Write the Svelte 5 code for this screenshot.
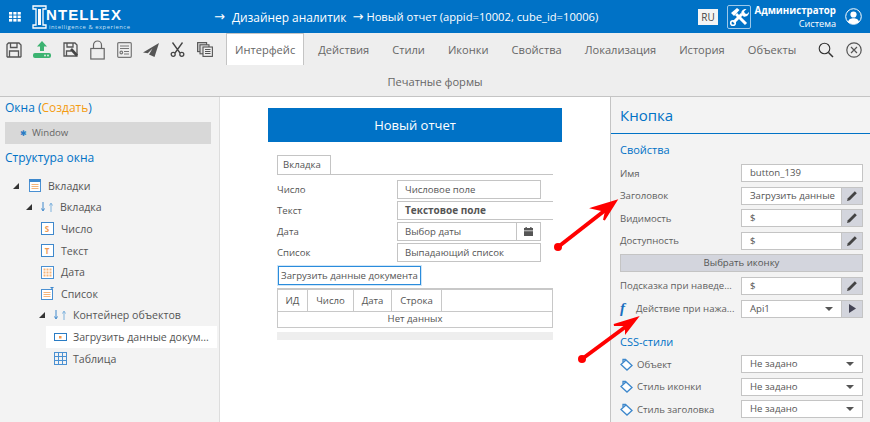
<script>
    const tabs = ['Интерфейс', 'Действия', 'Стили', 'Иконки', 'Свойства', 'Локализация', 'История', 'Объекты'];

    const tree = [
        { label: 'Вкладки', depth: 0, arrow: true, icon: 'tabs' },
        { label: 'Вкладка', depth: 1, arrow: true, icon: 'updown' },
        { label: 'Число', depth: 2, icon: 'num' },
        { label: 'Текст', depth: 2, icon: 'text' },
        { label: 'Дата', depth: 2, icon: 'date' },
        { label: 'Список', depth: 2, icon: 'list' },
        { label: 'Контейнер объектов', depth: 2, arrow: true, icon: 'updown' },
        { label: 'Загрузить данные докум...', depth: 3, icon: 'btn', selected: true },
        { label: 'Таблица', depth: 3, icon: 'table' }
    ];

    const columns = ['ИД', 'Число', 'Дата', 'Строка'];
    const cssRows = ['Объект', 'Стиль иконки', 'Стиль заголовка'];
</script>

<div class="page">
    <header class="topbar">
        <svg class="grid-icon" width="12" height="10" viewBox="0 0 12 10" fill="#fff">
            {#each [0, 4.3, 8.6] as x}
                {#each [0, 3.5, 7] as y}
                    <rect {x} {y} width="3.2" height="2.6" />
                {/each}
            {/each}
        </svg>
        <div class="logo">
            <svg width="15" height="24" viewBox="0 0 15 24" fill="none" stroke="#fff" stroke-width="1.3">
                <path d="M1 1h13v3h-3v16h3v3H1v-3h3V4H1z" />
                <path d="M7.5 4v16" stroke-width="3" />
            </svg>
            <div class="logo-words">
                <span class="logo-name">NTELLEX</span>
                <span class="logo-sub">intelligence &amp; experience</span>
            </div>
        </div>
        <div class="crumbs">
            <span class="crumb-arrow">→</span><span>Дизайнер аналитик</span>
            <span class="crumb-arrow next">→</span><span class="crumb-last">Новый отчет (appid=10002, cube_id=10006)</span>
        </div>
        <span class="lang">RU</span>
        <div class="tools-badge">
            <svg width="22" height="22" viewBox="0 0 22 22" fill="none" stroke="#fff">
                <path d="M8 8l10 10" stroke-width="3" />
                <path d="M3 7l6-5 2.500 2-5.500 6z" fill="#fff" stroke="none" />
                <path d="M5.500 16.500 14 8" stroke-width="3" />
                <path d="M13.500 8.500c-1-3 1.500-6 5-5.500l-2.500 2.500 1 2 2 .5 2-2c.3 3-3 5.500-5.500 4.500z" fill="#fff" stroke="none" />
                <circle cx="5" cy="17" r="2.300" stroke-width="1.600" />
            </svg>
        </div>
        <div class="user">
            <strong>Администратор</strong>
            <span>Система</span>
        </div>
        <svg class="avatar" width="17" height="17" viewBox="0 0 17 17">
            <circle cx="8.500" cy="8.500" r="7.800" fill="none" stroke="#fff" stroke-width="1" />
            <circle cx="8.500" cy="6.500" r="3.100" fill="#fff" />
            <path d="M3 14c.6-3 3-3.800 5.500-3.800S13.400 11 14 14c-1.500 1.500-3.500 2-5.500 2S4.500 15.500 3 14z" fill="#fff" />
        </svg>
    </header>

    <div class="toolbar">
        <div class="tool-icons">
            <svg width="16" height="16" viewBox="0 0 16 16" fill="none" stroke="#555" stroke-width="1.300">
                <path d="M1 2.500 2.500 1H13l2 2v11.500l-.5.500h-13l-.5-.5z" />
                <path d="M4.500 1v4.500h6.500V1M3.500 15V9h9v6" />
            </svg>
            <svg width="18" height="17" viewBox="0 0 18 17">
                <path d="M9 0l5 5.500h-3V10H7V5.500H4z" fill="#3cb371" />
                <rect x="0" y="12" width="18" height="5" rx="2" fill="#3cb371" />
                <circle cx="12" cy="14.500" r=".9" fill="#eee" />
                <circle cx="15" cy="14.500" r=".9" fill="#eee" />
            </svg>
            <svg width="16" height="16" viewBox="0 0 16 16" fill="none" stroke="#555" stroke-width="1.300">
                <path d="M1 1h11l2 2v11H1z" />
                <path d="M4 1v4h6V1M3.500 14V9h5" />
                <path d="M8 7l6 6.500" stroke-width="2.600" stroke="#444" />
            </svg>
            <svg width="15" height="20" viewBox="0 0 15 20" fill="none" stroke="#666" stroke-width="1.200">
                <rect x=".8" y="8.500" width="13.400" height="10.500" />
                <path d="M3.500 8.500V5a4 4 0 0 1 8 0v3.500" />
            </svg>
            <svg width="15" height="16" viewBox="0 0 15 16" fill="none" stroke="#777" stroke-width="1.200">
                <rect x=".7" y=".7" width="13.600" height="14.600" rx="1" />
                <path d="M3 4h9M3 6.500h9M7 9.500h5M7 12h5" />
                <circle cx="4.300" cy="10.500" r="1.300" />
            </svg>
            <svg width="16" height="14" viewBox="0 0 16 14" fill="#555">
                <path d="M16 0 0 9.500l4.800.8L9.500 5.500 6 11.500l5.500 2.500z" />
            </svg>
            <svg width="15" height="15" viewBox="0 0 15 15" fill="none" stroke="#444" stroke-width="1.300">
                <path d="M2.500 .5 10 11M12.500 .5 5 11" />
                <circle cx="3.200" cy="12.300" r="2" />
                <circle cx="11.800" cy="12.300" r="2" />
            </svg>
            <svg width="16" height="15" viewBox="0 0 16 15" fill="none" stroke="#555" stroke-width="1.100">
                <rect x=".6" y=".6" width="9" height="9" fill="#ccc" />
                <rect x="3" y="2.800" width="9" height="9" fill="#ddd" />
                <rect x="6" y="5" width="9.400" height="9.400" fill="#eee" />
                <path d="M8 7.500h5.500M8 9.500h5.500M8 11.500h5.500" />
            </svg>
        </div>
        <div class="tab-area">
            <nav class="tabs">
                {#each tabs as tab, i}
                    <span class="tab" class:active={i === 0}>{tab}</span>
                {/each}
            </nav>
            <span class="tab second">Печатные формы</span>
        </div>
        <div class="tool-right">
            <svg width="16" height="16" viewBox="0 0 16 16" fill="none" stroke="#333">
                <circle cx="6.500" cy="6.500" r="5.300" stroke-width="1.100" />
                <path d="M10.500 10.500 15 15" stroke-width="1.500" />
            </svg>
            <svg width="16" height="16" viewBox="0 0 16 16" fill="none" stroke="#555" stroke-width="1.200">
                <circle cx="8" cy="8" r="7.200" />
                <path d="M5 5l6 6M11 5l-6 6" />
            </svg>
        </div>
    </div>

    <main class="main">
        <aside class="left">
            <div class="left-title">Окна (<span class="orange">Создать</span>)</div>
            <div class="window-row"><span class="star">✱</span>Window</div>
            <div class="left-title struct">Структура окна</div>
            <ul class="tree">
                {#each tree as node}
                    <li class="node d{node.depth}" class:selected={node.selected} class:nested={node.depth === 2 && node.arrow}>
                        <span class="caret">
                            {#if node.arrow}
                                <svg width="6" height="6" viewBox="0 0 6 6"><path d="M6 0v6H0z" fill="#333" /></svg>
                            {/if}
                        </span>
                        <span class="node-icon">
                            {#if node.icon === 'tabs'}
                                <svg width="12" height="13" viewBox="0 0 12 13">
                                    <rect x=".5" y=".5" width="11" height="12" fill="#fff" stroke="#4a90d2" />
                                    <rect x="0" y="0" width="12" height="3" fill="#3e88cc" />
                                    <path d="M2.500 5.500h7M2.500 7.500h7M2.500 9.500h7" stroke="#f5b57a" />
                                </svg>
                            {:else if node.icon === 'updown'}
                                <svg width="14" height="10" viewBox="0 0 14 10" fill="none">
                                    <path d="M3 0v8M1.500 6.500 3 9l1.500-2.500" stroke="#3e88cc" />
                                    <path d="M11 10V2M9.500 3.500 11 1l1.500 2.500" stroke="#7fb2dd" />
                                </svg>
                            {:else if node.icon === 'num' || node.icon === 'text'}
                                <span class="letter-icon" class:num={node.icon === 'num'}>{node.icon === 'num' ? 'S' : 'T'}</span>
                            {:else if node.icon === 'date'}
                                <svg width="13" height="13" viewBox="0 0 13 13">
                                    <rect x=".5" y=".5" width="12" height="12" fill="#fff" stroke="#4a90d2" />
                                    {#each [2.500, 5.500, 8.500] as x}
                                        {#each [2.500, 5.500, 8.500] as y}
                                            <rect {x} {y} width="2" height="2" fill="#f5b57a" />
                                        {/each}
                                    {/each}
                                </svg>
                            {:else if node.icon === 'list'}
                                <svg width="13" height="13" viewBox="0 0 13 13">
                                    <rect x=".5" y="2.500" width="11" height="10" fill="#fff" stroke="#4a90d2" />
                                    <path d="M2.500 5.500h7M2.500 7.500h7M2.500 9.500h7" stroke="#f5b57a" />
                                    <path d="M9 0h4l-2 2.200z" fill="#3e88cc" />
                                </svg>
                            {:else if node.icon === 'btn'}
                                <svg width="13" height="8" viewBox="0 0 13 8">
                                    <rect x=".5" y=".5" width="12" height="7" fill="#fff" stroke="#2a7cc4" />
                                    <rect x="5" y="3" width="2.500" height="2.500" fill="#f09a50" />
                                </svg>
                            {:else}
                                <svg width="13" height="13" viewBox="0 0 13 13" fill="none" stroke="#4a90d2">
                                    <rect x=".5" y=".5" width="12" height="12" />
                                    <path d="M.5 4.500h12M.5 8.500h12M4.500 .5v12M8.500 .5v12" />
                                </svg>
                            {/if}
                        </span>
                        <span class="node-label">{node.label}</span>
                    </li>
                {/each}
            </ul>
        </aside>

        <section class="center">
            <div class="form">
                <h1 class="form-title">Новый отчет</h1>
                <div class="form-body">
                    <div class="tabstrip"><span class="form-tab">Вкладка</span></div>
                    <div class="frow">
                        <span class="flabel">Число</span>
                        <span class="finput">Числовое поле</span>
                    </div>
                    <div class="frow">
                        <span class="flabel">Текст</span>
                        <span class="finput wide">Текстовое поле</span>
                    </div>
                    <div class="frow">
                        <span class="flabel">Дата</span>
                        <span class="finput date">
                            <span class="date-text">Выбор даты</span>
                            <span class="date-btn">
                                <svg width="9" height="9" viewBox="0 0 9 9" fill="#555">
                                    <rect x="0" y="1" width="9" height="2.500" />
                                    <rect x="0" y="4.200" width="9" height="4.800" />
                                    <rect x="1.500" y="0" width="1.300" height="1.500" />
                                    <rect x="6.200" y="0" width="1.300" height="1.500" />
                                </svg>
                            </span>
                        </span>
                    </div>
                    <div class="frow">
                        <span class="flabel">Список</span>
                        <span class="finput">Выпадающий список</span>
                    </div>
                    <button class="load">Загрузить данные документа</button>
                    <div class="grid">
                        <div class="grid-head">
                            {#each columns as col}
                                <span class="col">{col}</span>
                            {/each}
                        </div>
                        <div class="grid-empty">Нет данных</div>
                    </div>
                    <div class="scrollbar"></div>
                </div>
            </div>
        </section>

        <aside class="right">
            <div class="right-title">Кнопка</div>
            <div class="props">
                <div class="section-title">Свойства</div>
                <div class="prow">
                    <span class="plabel">Имя</span>
                    <span class="pinput">button_139</span>
                </div>
                {#each [['Заголовок', 'Загрузить данные'], ['Видимость', '$'], ['Доступность', '$']] as [label, value]}
                    <div class="prow">
                        <span class="plabel">{label}</span>
                        <span class="pinput">{value}</span>
                        <span class="pbtn">
                            <svg width="10" height="10" viewBox="0 0 10 10"><path d="M0 10l.8-2.800L7.800.2 9.800 2.200 2.800 9.200z" fill="#444" /></svg>
                        </span>
                    </div>
                {/each}
                <div class="choose">Выбрать иконку</div>
                <div class="prow">
                    <span class="plabel">Подсказка при наведе...</span>
                    <span class="pinput">$</span>
                    <span class="pbtn">
                        <svg width="10" height="10" viewBox="0 0 10 10"><path d="M0 10l.8-2.800L7.800.2 9.800 2.200 2.800 9.200z" fill="#444" /></svg>
                    </span>
                </div>
                <div class="prow">
                    <span class="plabel"><i class="fx">f</i>Действие при нажа...</span>
                    <span class="pinput select">Api1<b class="down"></b></span>
                    <span class="pbtn">
                        <svg width="7" height="9" viewBox="0 0 7 9"><path d="M0 0l7 4.500L0 9z" fill="#445" /></svg>
                    </span>
                </div>
                <div class="section-title css">CSS-стили</div>
                {#each cssRows as row}
                    <div class="prow">
                        <span class="plabel">
                            <svg class="bucket" width="13" height="13" viewBox="0 0 13 13" fill="#fff" stroke="#3e88cc" stroke-width="1.300">
                                <path d="M1 6.500 6 2l6 5.500-5 4.500z" />
                                <path d="M3 4V1.500h3" fill="none" />
                            </svg>{row}
                        </span>
                        <span class="pinput select full">Не задано<b class="down"></b></span>
                    </div>
                {/each}
            </div>
        </aside>
    </main>

    <!-- red annotation arrows drawn over the screenshot -->
    <svg class="marks" width="870" height="422" viewBox="0 0 870 422" fill="#f00" stroke="#f00">
        <path d="M558 247 608 208" stroke-width="4" />
        <path d="M593 208 616 201 604 220 606 211z" stroke-width="2" />
        <circle cx="558" cy="247" r="4" stroke="none" />
        <path d="M582 359 628 325" stroke-width="4" />
        <path d="M614 325 637 318 626 332 626 325z" stroke-width="2" />
        <circle cx="582" cy="359" r="4" stroke="none" />
    </svg>
</div>

<style>
    :global(body) {
        margin: 0;
        background: #fff;
    }

    .page {
        position: relative;
        width: 870px;
        height: 422px;
        overflow: hidden;
        font-family: 'Open Sans', sans-serif;
        font-size: 10px;
        color: #555;
    }

    .topbar {
        height: 33px;
        background: #0072c6;
        color: #fff;
        display: flex;
        align-items: center;
        padding-left: 9px;
    }

    .grid-icon {
        margin-right: 11px;
    }

    .logo {
        display: flex;
        align-items: center;
        width: 182px;
    }

    .logo-words {
        display: flex;
        flex-direction: column;
        margin-left: -1px;
        margin-top: 3px;
    }

    .logo-name {
        font-family: 'Liberation Sans', sans-serif;
        font-weight: 700;
        font-size: 15px;
        letter-spacing: 1.100px;
        line-height: 15px;
    }

    .logo-sub {
        font-size: 5.800px;
        line-height: 6px;
        letter-spacing: .55px;
        margin: 2px 0 0 3px;
        color: #cfe4f5;
        white-space: nowrap;
    }

    .crumbs {
        flex: 1;
        display: flex;
        align-items: center;
        font-size: 11.900px;
        white-space: nowrap;
    }

    .crumb-arrow {
        margin-right: 7px;
        font-family: 'DejaVu Sans', sans-serif;
        font-size: 13px;
    }

    .crumb-arrow.next {
        margin: 0 3px 0 6px;
    }

    .crumb-last {
        font-size: 11.200px;
    }

    .lang {
        width: 20px;
        height: 16px;
        margin-right: 9px;
        background: #f4f4f4;
        color: #444;
        font-size: 10px;
        line-height: 16px;
        text-align: center;
    }

    .tools-badge {
        width: 22px;
        height: 22px;
        border: 1px solid #9cc8ea;
        border-radius: 2px;
        display: flex;
        margin-right: 4px;
    }

    .user {
        display: flex;
        flex-direction: column;
        align-items: flex-end;
        width: 81px;
        line-height: 13px;
        font-size: 9.200px;
        margin-right: 9px;
    }

    .user strong {
        font-size: 9.700px;
    }

    .avatar {
        margin-right: 8px;
    }

    .toolbar {
        height: 63px;
        background: #eee;
        border-bottom: 1px solid #c4c4c4;
        display: flex;
        align-items: flex-start;
    }

    .tool-icons {
        width: 226px;
        height: 33px;
        display: flex;
        align-items: center;
        gap: 11.400px;
        padding-left: 6px;
        box-sizing: border-box;
        flex: none;
    }

    .tab-area {
        flex: 1;
        display: flex;
        flex-direction: column;
        align-items: center;
        width: 0;
    }

    .tabs {
        display: flex;
        align-self: flex-start;
    }

    .tab {
        font-size: 11.100px;
        line-height: 31px;
        padding: 1px 11.500px 0;
        white-space: nowrap;
        color: #666;
    }

    .tab.active {
        background: #fff;
        border: 1px solid #c4c4c4;
        border-bottom: 0;
        padding: 0 8px;
        margin-right: 2.500px;
    }

    .tab.second {
        margin-right: 174px;
    }

    .tool-right {
        width: 52px;
        height: 33px;
        display: flex;
        align-items: center;
        gap: 12px;
        flex: none;
    }

    .main {
        display: flex;
        height: 325px;
    }

    .left {
        width: 220px;
        flex: none;
        background: #f3f3f3;
        border-right: 1px solid #ddd;
        padding: 2px 0 0 5px;
        box-sizing: border-box;
    }

    .left-title {
        font-size: 12px;
        line-height: 17px;
        color: #0072c6;
    }

    .orange {
        color: #f39c12;
    }

    .window-row {
        width: 206px;
        height: 22px;
        margin-top: 6px;
        background: #d8d8d8;
        line-height: 22px;
        padding-left: 15px;
        box-sizing: border-box;
        font-size: 9.600px;
        color: #666;
    }

    .star {
        color: #2a7cc4;
        font-size: 8px;
        margin-right: 5px;
    }

    .struct {
        margin-top: 5px;
    }

    .tree {
        list-style: none;
        margin: 9px 0 0;
        padding: 0;
    }

    .node {
        display: flex;
        align-items: center;
        height: 21.600px;
        font-size: 10.600px;
        white-space: nowrap;
        color: #555;
    }

    .caret {
        width: 6px;
        height: 6px;
        display: flex;
        flex: none;
    }

    .node-icon {
        width: 14px;
        display: flex;
        justify-content: center;
        align-items: center;
        flex: none;
    }

    .node-label {
        margin-left: 6px;
    }

    .d0 { padding-left: 8px; }
    .d0 .caret { margin-right: 9px; }
    .d1 { padding-left: 21px; }
    .d1 .caret { margin-right: 8px; }
    .d2 { padding-left: 35px; }
    .d2 .node-label { margin-left: 7px; }
    .d3 { padding-left: 48px; }
    .d2 .caret, .d3 .caret { width: 0; }

    .d2.nested { padding-left: 34px; }
    .d2.nested .caret { width: 6px; margin-right: 8px; }
    .d2.nested .node-label { margin-left: 6px; }

    .node.selected {
        background: #fff;
        width: 164px;
        margin-left: 41px;
        padding-left: 7px;
    }

    .letter-icon {
        width: 11px;
        height: 11px;
        border: 1px solid #3e88cc;
        background: #fff;
        color: #f09a50;
        font-size: 8px;
        font-weight: 700;
        line-height: 11px;
        text-align: center;
    }

    .center {
        flex: 1;
        background: #fff;
    }

    .form {
        width: 294px;
        margin: 11px 0 0 48px;
    }

    .form-title {
        margin: 0;
        height: 34px;
        background: #0072c6;
        color: #fff;
        font-size: 13px;
        font-weight: 400;
        line-height: 34px;
        text-align: center;
    }

    .form-body {
        padding: 13px 9px 0;
        width: 276px;
    }

    .tabstrip {
        height: 19px;
        border-bottom: 1px solid #c4c4c4;
    }

    .form-tab {
        display: inline-block;
        width: 48px;
        height: 18px;
        padding-right: 4px;
        border: 1px solid #c4c4c4;
        border-bottom: 0;
        font-size: 9.600px;
        line-height: 18px;
        text-align: center;
    }

    .frow {
        display: flex;
        align-items: center;
        height: 19px;
        margin-top: 2px;
        font-size: 9.600px;
    }

    .tabstrip + .frow {
        margin-top: 5px;
    }

    .flabel {
        width: 120px;
        flex: none;
    }

    .finput {
        width: 144px;
        height: 19px;
        border: 1px solid #c4c4c4;
        box-sizing: border-box;
        padding-left: 7px;
        line-height: 17px;
        display: flex;
    }

    .finput.wide {
        width: 156px;
        border-right: 0;
        font-weight: 700;
        font-size: 10px;
    }

    .finput.date {
        padding-left: 0;
    }

    .date-text {
        flex: 1;
        padding-left: 7px;
    }

    .date-btn {
        width: 23px;
        border-left: 1px solid #c4c4c4;
        display: flex;
        align-items: center;
        justify-content: center;
    }

    .load {
        display: block;
        width: 143px;
        height: 19px;
        margin: 4px 0 0 1px;
        padding: 0;
        border: 1px solid #2a8cdc;
        outline: 1px solid #cfe6f8;
        background: #fff;
        font: 9.600px 'Open Sans', sans-serif;
        color: #555;
        white-space: nowrap;
    }

    .grid {
        margin-top: 3px;
        border: 1px solid #c8c8c8;
        border-top-width: 2px;
        font-size: 9.600px;
    }

    .grid-head {
        display: grid;
        grid-template-columns: 30px 46px 38px 50px;
        height: 21px;
        border-bottom: 1px solid #c8c8c8;
    }

    .col {
        line-height: 21px;
        text-align: center;
        border-right: 1px solid #c8c8c8;
    }

    .grid-empty {
        height: 15px;
        line-height: 14px;
        text-align: center;
    }

    .scrollbar {
        height: 8px;
        margin-top: 4px;
        background: #eee;
    }

    .right {
        width: 260px;
        flex: none;
        background: #f3f3f3;
        border-left: 1px solid #c4c4c4;
        box-sizing: border-box;
    }

    .right-title {
        height: 36px;
        border-bottom: 1px solid #0072c6;
        font-size: 15px;
        line-height: 36px;
        padding-left: 9px;
        color: #0072c6;
    }

    .props {
        padding: 7px 7px 0 9px;
    }

    .section-title {
        font-size: 11px;
        line-height: 17px;
        color: #0072c6;
    }

    .section-title.css {
        margin-top: 15px;
    }

    .prow {
        display: flex;
        align-items: center;
        height: 18px;
        margin-top: 4.600px;
        font-size: 9.600px;
    }

    .section-title + .prow {
        margin-top: 6px;
    }

    .section-title.css + .prow {
        margin-top: 5.500px;
    }

    .plabel {
        width: 121px;
        flex: none;
        white-space: nowrap;
        display: flex;
        align-items: center;
        color: #5f5f5f;
    }

    .pinput {
        flex: 1;
        height: 18px;
        box-sizing: border-box;
        border: 1px solid #c4c4c4;
        background: #fff;
        padding-left: 8px;
        line-height: 16px;
        position: relative;
        white-space: nowrap;
    }

    .pbtn {
        width: 21px;
        height: 18px;
        box-sizing: border-box;
        background: #d3d5dd;
        border: 1px solid #c4c4c4;
        border-left: 0;
        display: flex;
        align-items: center;
        justify-content: center;
    }

    .choose {
        height: 18px;
        margin-top: 4.600px;
        background: #d3d5dd;
        border: 1px solid #c4c4c4;
        box-sizing: border-box;
        text-align: center;
        line-height: 16px;
        font-size: 9.600px;
    }

    .down {
        position: absolute;
        right: 8px;
        top: 6px;
        border: 4px solid transparent;
        border-top: 4px solid #555;
        border-bottom: 0;
    }

    .fx {
        font-family: 'Liberation Serif', serif;
        font-weight: 700;
        font-size: 15px;
        color: #1a6fc0;
        width: 16px;
    }

    .bucket {
        margin-right: 4px;
        flex: none;
    }

    .marks {
        position: absolute;
        left: 0;
        top: 0;
        pointer-events: none;
    }
</style>
